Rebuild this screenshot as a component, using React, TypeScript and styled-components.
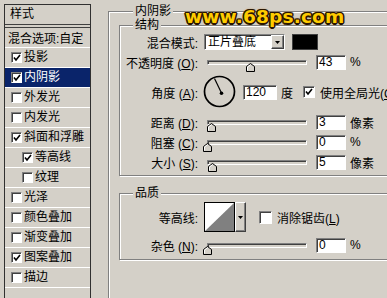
import React from 'react';
import styled, { createGlobalStyle } from 'styled-components';

const GlobalStyle = createGlobalStyle`
  html, body {
    margin: 0;
    padding: 0;
    background: #d4d0c8;
  }
  body {
    font-family: "Liberation Sans", "Noto Sans CJK SC", sans-serif;
    font-size: 12px;
    color: #000;
  }
`;

const layers = [
  { name: '投影', checked: true },
  { name: '内阴影', checked: true, selected: true },
  { name: '外发光' },
  { name: '内发光' },
  { name: '斜面和浮雕', checked: true },
  { name: '等高线', checked: true, indent: true },
  { name: '纹理', indent: true },
  { name: '光泽' },
  { name: '颜色叠加' },
  { name: '渐变叠加' },
  { name: '图案叠加', checked: true },
  { name: '描边' },
];

const Check = () => (
  <svg width="8" height="8" viewBox="0 0 8 8">
    <polyline points="1,3.5 3,6 7,1" fill="none" stroke="#000" strokeWidth="1.6" />
  </svg>
);

const Arrow = () => (
  <svg width="5" height="3" viewBox="0 0 5 3">
    <polygon points="0,0 5,0 2.5,3" fill="#000" />
  </svg>
);

const ThumbShape = () => (
  <>
    <path d="M0.5 8.5 V3.5 L4.5 0.5 L8.5 3.5 V8.5 Z" fill="#d4d0c8" stroke="#000" />
    <path d="M1.5 7.5 V4 L4.5 1.8" fill="none" stroke="#fff" />
  </>
);

const App = () => {
  return (
    <Window>
      <GlobalStyle />
      <StyleList>
        <ListHeader>样式</ListHeader>
        <ListItem $pad={3}>混合选项:自定</ListItem>
        {layers.map((l) => (
          <ListItem key={l.name} $pad={l.indent ? 17 : 6} $selected={!!l.selected}>
            <CheckBox $size={11}>{l.checked && <Check />}</CheckBox>
            <ItemText>{l.name}</ItemText>
          </ListItem>
        ))}
      </StyleList>

      <OuterGroup>
        <Legend $ml={14}>内阴影</Legend>

        <Group $mt={7} $pb={3}>
          <Legend $ml={13}>结构</Legend>

          <FieldRow>
            <FieldLabel>混合模式:</FieldLabel>
            <Select>
              <SelectText>正片叠底</SelectText>
              <DropButton $w={13}>
                <Arrow />
              </DropButton>
            </Select>
            <Swatch />
          </FieldRow>

          <SliderField label="不透明度" k="O" value="43" unit="%" pos={43} />

          <FieldRow $h={34} $mt={3}>
            <FieldLabel>
              角度 (<Key>A</Key>):
            </FieldLabel>
            <Dial width="34" height="34" viewBox="0 0 34 34">
              <circle cx="16.5" cy="16.5" r="15" fill="none" stroke="#000" strokeWidth="1.7" />
              <line x1="18.5" y1="18" x2="11.5" y2="3.5" stroke="#000" strokeWidth="1.2" />
              <circle cx="18.5" cy="18.3" r="1.8" fill="#000" />
            </Dial>
            <NumberBox $w={34} $ml={6}>120</NumberBox>
            <Unit $ml={4}>度</Unit>
            <CheckBox $size={12} $ml={10}>
              <Check />
            </CheckBox>
            <Unit $ml={5}>
              使用全局光(<Key>G</Key>)
            </Unit>
          </FieldRow>

          <SliderField label="距离" k="D" value="3" unit="像素" pos={4} mt={3} />
          <SliderField label="阻塞" k="C" value="0" unit="%" pos={0} />
          <SliderField label="大小" k="S" value="5" unit="像素" pos={5} />
        </Group>

        <Group $mt={17} $pb={4}>
          <Legend $ml={13}>品质</Legend>

          <FieldRow $h={32} $mt={1}>
            <FieldLabel>等高线:</FieldLabel>
            <ContourPicker>
              <ContourPreview>
                <svg width="29" height="28" viewBox="0 0 29 28">
                  <polygon points="0,28 29,0 29,28" fill="#808080" />
                </svg>
              </ContourPreview>
              <DropButton $w={11}>
                <Arrow />
              </DropButton>
            </ContourPicker>
            <CheckBox $size={13} $ml={13} />
            <Unit $ml={5}>
              消除锯齿(<Key>L</Key>)
            </Unit>
          </FieldRow>

          <SliderField label="杂色" k="N" value="0" unit="%" pos={0} mt={2} />
        </Group>
      </OuterGroup>

      <Watermark>www.68ps.com</Watermark>
    </Window>
  );
};

const SliderField = (props: {
  label: string;
  k: string;
  value: string;
  unit: string;
  pos: number;
  mt?: number;
}) => {
  const { label, k, value, unit, pos, mt } = props;
  return (
    <FieldRow $mt={mt}>
      <FieldLabel>
        {label} (<Key>{k}</Key>):
      </FieldLabel>
      <SliderTrack>
        <Thumb $pos={pos} width="9" height="9" viewBox="0 0 9 9">
          <ThumbShape />
        </Thumb>
      </SliderTrack>
      <NumberBox $w={30} $ml={9}>{value}</NumberBox>
      <Unit $ml={4}>{unit}</Unit>
    </FieldRow>
  );
};

const Window = styled.div`
  position: relative;
  width: 387px;
  height: 298px;
  overflow: hidden;
  box-sizing: border-box;
  padding: 4px 0 0 4px;
  background: #d4d0c8;
  display: flex;
  align-items: flex-start;
`;

const StyleList = styled.div`
  flex: none;
  width: 87px;
  height: 310px;
  box-sizing: border-box;
  border: 1px solid #303030;
  display: flex;
  flex-direction: column;
`;

const ListHeader = styled.div`
  height: 23px;
  box-sizing: border-box;
  padding-left: 5px;
  line-height: 19px;
  border-bottom: 4px double #404040;
`;

const ListItem = styled.div<{ $pad: number; $selected?: boolean }>`
  height: 20px;
  box-sizing: border-box;
  display: flex;
  align-items: center;
  padding-left: ${(p) => p.$pad}px;
  border-bottom: 1px solid #fff;
  white-space: nowrap;
  background: ${(p) => (p.$selected ? '#0a246a' : 'transparent')};
  color: ${(p) => (p.$selected ? '#fff' : '#000')};
`;

const ItemText = styled.span`
  margin-left: 2px;
  line-height: 19px;
`;

const CheckBox = styled.span<{ $size: number; $ml?: number }>`
  flex: none;
  width: ${(p) => p.$size}px;
  height: ${(p) => p.$size}px;
  margin-left: ${(p) => p.$ml ?? 0}px;
  box-sizing: border-box;
  background: #fff;
  border: 1px solid;
  border-color: #808080 #fff #fff #808080;
  box-shadow: inset 1px 1px 0 #404040;
  display: flex;
  align-items: center;
  justify-content: center;
`;

const OuterGroup = styled.div`
  flex: none;
  width: 330px;
  height: 320px;
  margin: 7px 0 0 17px;
  box-sizing: border-box;
  padding-left: 10px;
  border: 1px solid #808080;
  box-shadow: inset 1px 1px 0 #fff, 1px 1px 0 #fff;
  display: flex;
  flex-direction: column;
`;

const Group = styled.div<{ $mt: number; $pb: number }>`
  margin-top: ${(p) => p.$mt}px;
  padding-bottom: ${(p) => p.$pb}px;
  border: 1px solid #808080;
  box-shadow: inset 1px 1px 0 #fff, 1px 1px 0 #fff;
  display: flex;
  flex-direction: column;
`;

const Legend = styled.div<{ $ml: number }>`
  align-self: flex-start;
  height: 14px;
  line-height: 14px;
  margin: -8px 0 0 ${(p) => p.$ml}px;
  padding: 0 2px;
  background: #d4d0c8;
`;

const FieldRow = styled.div<{ $h?: number; $mt?: number }>`
  display: flex;
  align-items: center;
  height: ${(p) => p.$h ?? 20}px;
  margin-top: ${(p) => p.$mt ?? 0}px;
  white-space: nowrap;
`;

const FieldLabel = styled.span`
  flex: none;
  width: 78px;
  text-align: right;
`;

const Key = styled.span`
  text-decoration: underline;
`;

const Select = styled.div`
  flex: none;
  display: flex;
  width: 81px;
  height: 16px;
  margin-left: 6px;
  box-sizing: border-box;
  background: #fff;
  border: 1px solid;
  border-color: #808080 #fff #fff #808080;
  box-shadow: inset 1px 1px 0 #404040;
`;

const SelectText = styled.span`
  flex: 1;
  padding-left: 3px;
  line-height: 14px;
`;

const DropButton = styled.span<{ $w: number }>`
  flex: none;
  width: ${(p) => p.$w}px;
  box-sizing: border-box;
  background: #d4d0c8;
  border: 1px solid;
  border-color: #fff #404040 #404040 #fff;
  box-shadow: inset -1px -1px 0 #808080;
  display: flex;
  align-items: center;
  justify-content: center;
`;

const Swatch = styled.span`
  flex: none;
  width: 26px;
  height: 16px;
  margin-left: 7px;
  box-sizing: border-box;
  background: #000;
  border: 1px solid #404040;
`;

const SliderTrack = styled.div`
  position: relative;
  flex: none;
  width: 100px;
  height: 5px;
  margin-left: 9px;
  box-sizing: border-box;
  background: #d4d0c8;
  border: 1px solid;
  border-color: #808080 #fff #fff #808080;
  box-shadow: inset 1px 1px 0 #404040;
`;

const Thumb = styled.svg<{ $pos: number }>`
  position: absolute;
  top: 2px;
  left: ${(p) => p.$pos - 5.5}px;
`;

const NumberBox = styled.span<{ $w: number; $ml: number }>`
  flex: none;
  width: ${(p) => p.$w}px;
  height: 15px;
  margin-left: ${(p) => p.$ml}px;
  box-sizing: border-box;
  padding-left: 2px;
  line-height: 13px;
  background: #fff;
  border: 1px solid;
  border-color: #808080 #fff #fff #808080;
  box-shadow: inset 1px 1px 0 #404040;
`;

const Unit = styled.span<{ $ml?: number }>`
  flex: none;
  margin-left: ${(p) => p.$ml ?? 0}px;
`;

const Dial = styled.svg`
  flex: none;
  margin-left: 5px;
`;

const ContourPicker = styled.div`
  flex: none;
  display: flex;
  height: 30px;
  margin-left: 6px;
`;

const ContourPreview = styled.span`
  width: 31px;
  box-sizing: border-box;
  background: #fff;
  border: 1px solid #000;
  display: flex;
`;

const Watermark = styled.div`
  position: absolute;
  left: 185px;
  top: 7px;
  font-family: "DejaVu Sans", sans-serif;
  font-weight: bold;
  font-size: 18.5px;
  line-height: 20px;
  letter-spacing: 0.2px;
  color: #ffcc00;
  text-shadow: 1.5px 0 0 #2a1600, -1.5px 0 0 #2a1600, 0 1.5px 0 #2a1600, 0 -1.5px 0 #2a1600,
    1px 1px 0 #2a1600, -1px 1px 0 #2a1600, 1px -1px 0 #2a1600, -1px -1px 0 #2a1600,
    0 0 3px #b86a00;
`;

export default App;
